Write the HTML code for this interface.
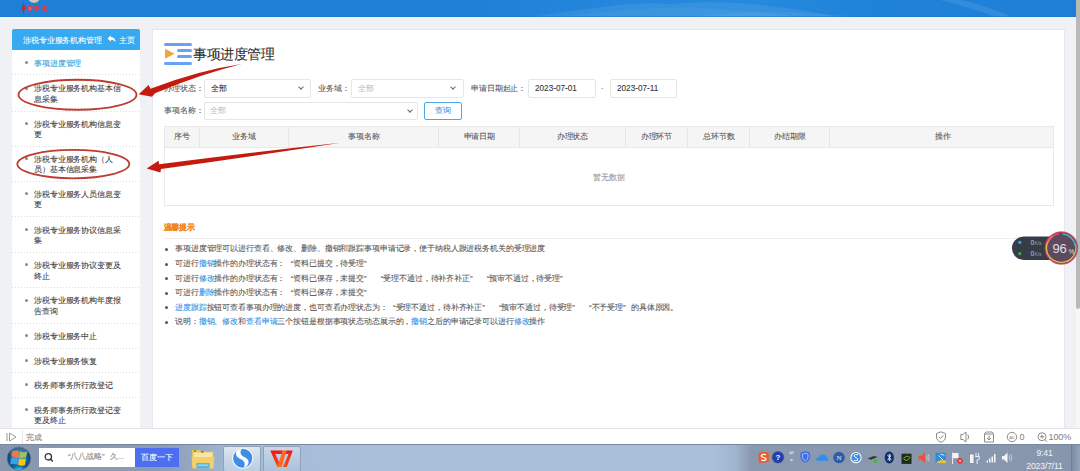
<!DOCTYPE html>
<html><head><meta charset="utf-8">
<style>
*{margin:0;padding:0;box-sizing:border-box}
html,body{width:1080px;height:471px;overflow:hidden;background:#f0f1f4;font-family:"Liberation Sans",sans-serif;color:#333;position:relative;letter-spacing:-0.125px;-webkit-text-stroke:0.08px currentColor}
.a{position:absolute;white-space:nowrap}
c{display:inline-block;width:1em;letter-spacing:0;text-align:center}
#top{left:0;top:0;width:1076px;height:16.5px;background:linear-gradient(90deg,#1f7fd6 0%,#1f80d7 45%,#2487dc 58%,#2589dd 70%,#1f82d9 82%,#1f7fd7 100%);overflow:hidden}
#vscroll{left:1076px;top:0;width:4px;height:428px;background:#f7f7f7}
#side{left:12px;top:29px;width:128px;height:399px;background:#fff;overflow:hidden}
#sidehd{left:0;top:0;width:128px;height:21px;background:#36a9f1;border-radius:2px 2px 0 0;color:#fff;font-size:7.875px;line-height:21px}
.mi{position:absolute;left:0;width:128px;font-size:7.875px;line-height:10.5px}
.mi:after{content:"";position:absolute;left:0;bottom:-0.8px;width:128px;height:1px;background:repeating-linear-gradient(90deg,#dcdcdc 0 1.5px,transparent 1.5px 3px)}
.mi span{position:absolute;left:22px;top:8.9px;white-space:nowrap}
.mi i{position:absolute;left:12.8px;top:11px;width:3px;height:3px;border-radius:50%;background:#8a8a8a}
#panel{left:152px;top:28.5px;width:913px;height:400px;background:#fff;border:1px solid #e7e8ec;border-bottom:none}
.lbl{font-size:7.875px;color:#555;line-height:10px}
.sel{border:1px solid #e6e6e6;border-radius:2px;background:#fff;height:18.5px}
.sel .t{position:absolute;top:3.5px;font-size:7.875px;line-height:10px}
.chev{position:absolute;width:4px;height:4px;border-right:1.1px solid #666;border-bottom:1.1px solid #666;transform:rotate(45deg)}
#tbl{left:164px;top:125.5px;width:890px;height:80px;border:1px solid #e9e9e9;background:#fff}
#thd{left:0;top:0;width:888px;height:21.5px;background:#f5f5f5;border-bottom:1px solid #e8e8e8}
.th{position:absolute;top:0;height:20.5px;line-height:20.5px;text-align:center;font-size:7.875px;color:#555;border-right:1px solid #e6e6e6}
.tp{position:absolute;left:164px;height:12px;font-size:7.875px;line-height:12px;color:#555;white-space:nowrap}
.tp>i{position:absolute;left:0.5px;top:4.5px;width:3px;height:3px;border-radius:50%;background:#555}
.tp span{position:absolute;left:11px;top:0}
.bl{font-weight:normal;color:#2a8fe6}
.q1,.q2{display:inline-block;width:7.875px;font-style:normal}
.q1{text-align:right}
.q2{text-align:left}
.qs{display:inline-block;width:3.5px}
#status{left:0;top:428px;width:1080px;height:16px;background:#fff;border-top:1px solid #e4e4e4}
#task{left:0;top:444px;width:1080px;height:27px;background:linear-gradient(90deg,#8797ae 0%,#8b9cb4 15%,#a3bbd6 22%,#a8c0da 35%,#a8c0da 66%,#a0b6cf 68%,#8a99b0 69.6%,#8896ad 100%);border-top:1px solid #76879e;overflow:hidden}
</style></head><body>
<div id="top" class="a">
  <svg class="a" style="left:0;top:0" width="1076" height="17" viewBox="0 0 1076 17">
    <path d="M530 17 Q570 11 610 6 Q640 2 670 4 Q700 1 740 3 Q790 7 840 17 Z" fill="#ffffff" opacity="0.08"/>
    <path d="M560 17 Q600 12 640 9 Q680 6 720 9 Q760 12 800 17 Z" fill="#ffffff" opacity="0.04"/>
    <path d="M690 17 Q730 11 790 12 Q830 14 860 17 Z" fill="#ffffff" opacity="0.05"/>
    <path d="M940 0 H962 Q990 7 1012 17 H996 Q972 8 940 0 Z" fill="#ffffff" opacity="0.09"/>
    <path d="M0 16 H1076 V17 H0 Z" fill="#1a6fc4" opacity="0.4"/>
  </svg>
  <div class="a" style="left:28.3px;top:-9px;width:11.8px;height:11.8px;border-radius:50%;background:radial-gradient(circle at 50% 40%,#e4ded2,#bdb6a8)"></div>
  <svg class="a" style="left:19px;top:2px" width="32" height="12" viewBox="19 2 32 12">
    <path d="M21 7.2 Q23.5 5.6 26.3 6.6 Q26 9.3 23.5 9.6 Q21.3 9.3 21 7.2 Z" fill="#e8141c"/>
    <path d="M22.3 7.4 Q23.5 6.8 25 7.3" stroke="#f26060" stroke-width="0.6" fill="none"/>
    <path d="M23.6 3.5 V13.3" stroke="#e8141c" stroke-width="1.3"/>
    <path d="M27.8 6.8 Q30.5 5 32.5 6 L32 10.8 Q29.2 11.5 27.6 9.8 Z" fill="#e53a44"/>
    <path d="M28.8 7.8 L31.3 8.3 M29 9.3 L31 9.6" stroke="#f7a0a6" stroke-width="0.6"/>
    <path d="M35 6.2 L34.6 10.3 M36.6 5.3 Q37.2 8 36.2 10.8 M38 6 Q38.5 9 39.8 10.3" fill="none" stroke="#e53a44" stroke-width="1.1"/>
    <path d="M41.3 8.6 Q44 7.3 48 8 M44.6 5.2 V10.8 Q46.2 11.3 48 9.6 M46.6 5.8 L47.8 7" fill="none" stroke="#e53a44" stroke-width="1.2"/>
    <path d="M42.5 9.5 Q45 10.5 47.5 10" stroke="#e53a44" stroke-width="1" fill="none"/>
  </svg>
</div>
<div id="vscroll" class="a"><div class="a" style="left:0;top:0;width:4px;height:309px;background:#b9b9b9;border-radius:0 0 2px 2px"></div></div>

<div id="side" class="a">
  <div id="sidehd" class="a"><span class="a" style="left:11px;top:0.7px"><c>涉</c><c>税</c><c>专</c><c>业</c><c>服</c><c>务</c><c>机</c><c>构</c><c>管</c><c>理</c></span>
  <svg class="a" style="left:95px;top:6px" width="9" height="8" viewBox="0 0 9 8"><path d="M0.5 3.5 L4 0.5 L4 2.3 C7 2.3 8.5 4 8.5 7.5 C7.6 5.6 6.2 4.8 4 4.8 L4 6.6 Z" fill="#fff"/></svg>
  <span class="a" style="left:107px;top:0.7px"><c>主</c><c>页</c></span></div>
</div>
<div class="a" style="left:12px;top:0;width:128px;height:428px;overflow:hidden">
<div class="mi" style="top:50.0px;height:24.5px"><i></i><span style="color:#2c9bd3"><c>事</c><c>项</c><c>进</c><c>度</c><c>管</c><c>理</c></span></div>
<div class="mi" style="top:75.5px;height:35.5px"><i></i><span style="color:#3a3a3a"><c>涉</c><c>税</c><c>专</c><c>业</c><c>服</c><c>务</c><c>机</c><c>构</c><c>基</c><c>本</c><c>信</c><br><c>息</c><c>采</c><c>集</c></span></div>
<div class="mi" style="top:111.0px;height:35.0px"><i></i><span style="color:#3a3a3a"><c>涉</c><c>税</c><c>专</c><c>业</c><c>服</c><c>务</c><c>机</c><c>构</c><c>信</c><c>息</c><c>变</c><br><c>更</c></span></div>
<div class="mi" style="top:146.0px;height:35.0px"><i></i><span style="color:#3a3a3a"><c>涉</c><c>税</c><c>专</c><c>业</c><c>服</c><c>务</c><c>机</c><c>构</c><c>（</c><c>人</c><br><c>员</c><c>）</c><c>基</c><c>本</c><c>信</c><c>息</c><c>采</c><c>集</c></span></div>
<div class="mi" style="top:181.0px;height:35.7px"><i></i><span style="color:#3a3a3a"><c>涉</c><c>税</c><c>专</c><c>业</c><c>服</c><c>务</c><c>人</c><c>员</c><c>信</c><c>息</c><c>变</c><br><c>更</c></span></div>
<div class="mi" style="top:216.7px;height:35.6px"><i></i><span style="color:#3a3a3a"><c>涉</c><c>税</c><c>专</c><c>业</c><c>服</c><c>务</c><c>协</c><c>议</c><c>信</c><c>息</c><c>采</c><br><c>集</c></span></div>
<div class="mi" style="top:252.3px;height:35.3px"><i></i><span style="color:#3a3a3a"><c>涉</c><c>税</c><c>专</c><c>业</c><c>服</c><c>务</c><c>协</c><c>议</c><c>变</c><c>更</c><c>及</c><br><c>终</c><c>止</c></span></div>
<div class="mi" style="top:287.6px;height:35.4px"><i></i><span style="color:#3a3a3a"><c>涉</c><c>税</c><c>专</c><c>业</c><c>服</c><c>务</c><c>机</c><c>构</c><c>年</c><c>度</c><c>报</c><br><c>告</c><c>查</c><c>询</c></span></div>
<div class="mi" style="top:323.0px;height:25.0px"><i></i><span style="color:#3a3a3a"><c>涉</c><c>税</c><c>专</c><c>业</c><c>服</c><c>务</c><c>中</c><c>止</c></span></div>
<div class="mi" style="top:348.0px;height:24.4px"><i></i><span style="color:#3a3a3a"><c>涉</c><c>税</c><c>专</c><c>业</c><c>服</c><c>务</c><c>恢</c><c>复</c></span></div>
<div class="mi" style="top:372.4px;height:24.6px"><i></i><span style="color:#3a3a3a"><c>税</c><c>务</c><c>师</c><c>事</c><c>务</c><c>所</c><c>行</c><c>政</c><c>登</c><c>记</c></span></div>
<div class="mi" style="top:397.0px;height:35.5px"><i></i><span style="color:#3a3a3a"><c>税</c><c>务</c><c>师</c><c>事</c><c>务</c><c>所</c><c>行</c><c>政</c><c>登</c><c>记</c><c>变</c><br><c>更</c><c>及</c><c>终</c><c>止</c></span></div>
</div>

<div id="panel" class="a"></div>

<!-- title -->
<div class="a" style="left:164px;top:42.5px;width:28px;height:3px;border-radius:1.5px;background:#69a2f3"></div>
<div class="a" style="left:176.5px;top:48.5px;width:15.5px;height:3px;border-radius:1.5px;background:#69a2f3"></div>
<div class="a" style="left:176.5px;top:54.7px;width:15.5px;height:3px;border-radius:1.5px;background:#69a2f3"></div>
<div class="a" style="left:164px;top:61.5px;width:28px;height:3px;border-radius:1.5px;background:#69a2f3"></div>
<svg class="a" style="left:164px;top:48px" width="12" height="12" viewBox="0 0 12 12"><path d="M1 0.8 L10.5 5.7 L1 10.8 Z" fill="#f7a33d"/></svg>
<div class="a" style="left:193px;top:46.5px;font-size:13.5px;line-height:16px;color:#2b2b2b;letter-spacing:-0.6px"><c>事</c><c>项</c><c>进</c><c>度</c><c>管</c><c>理</c></div>

<!-- form row 1 -->
<div class="a lbl" style="left:164px;top:84px"><c>办</c><c>理</c><c>状</c><c>态</c><c>：</c></div>
<div class="a sel" style="left:204px;top:79.3px;width:107px"><span class="t" style="left:6px;color:#333"><c>全</c><c>部</c></span><i class="chev" style="left:93.5px;top:5px"></i></div>
<div class="a lbl" style="left:318px;top:84px"><c>业</c><c>务</c><c>域</c><c>：</c></div>
<div class="a sel" style="left:351px;top:79.3px;width:112.5px"><span class="t" style="left:6px;color:#c4c4c4"><c>全</c><c>部</c></span><i class="chev" style="left:99px;top:5px"></i></div>
<div class="a lbl" style="left:471px;top:84px"><c>申</c><c>请</c><c>日</c><c>期</c><c>起</c><c>止</c><c>：</c></div>
<div class="a sel" style="left:528px;top:79.3px;width:67.5px"><span class="t" style="left:6px;top:4.2px;color:#333;font-size:8.2px;letter-spacing:0">2023-07-01</span></div>
<div class="a lbl" style="left:601px;top:83px;color:#888">-</div>
<div class="a sel" style="left:610px;top:79.3px;width:67px"><span class="t" style="left:6px;top:4.2px;color:#333;font-size:8.2px;letter-spacing:0">2023-07-11</span></div>
<!-- form row 2 -->
<div class="a lbl" style="left:164px;top:106px"><c>事</c><c>项</c><c>名</c><c>称</c><c>：</c></div>
<div class="a sel" style="left:204px;top:102.3px;width:214px;height:17.5px"><span class="t" style="left:5px;top:3px;color:#c4c4c4"><c>全</c><c>部</c></span><i class="chev" style="left:203px;top:4.5px"></i></div>
<div class="a" style="left:424px;top:102.3px;width:38px;height:17.5px;border:1px solid #4ea6ea;border-radius:2px;background:#fff;color:#3a95e6;font-size:7.875px;line-height:15.5px;text-align:center"><c>查</c><c>询</c></div>

<!-- table -->
<div id="tbl" class="a">
  <div id="thd" class="a">
<div class="th" style="left:0.0px;width:34.7px"><c>序</c><c>号</c></div>
<div class="th" style="left:34.7px;width:89.7px"><c>业</c><c>务</c><c>域</c></div>
<div class="th" style="left:124.4px;width:150.1px"><c>事</c><c>项</c><c>名</c><c>称</c></div>
<div class="th" style="left:274.5px;width:80.5px"><c>申</c><c>请</c><c>日</c><c>期</c></div>
<div class="th" style="left:355.0px;width:105.8px"><c>办</c><c>理</c><c>状</c><c>态</c></div>
<div class="th" style="left:460.8px;width:62.2px"><c>办</c><c>理</c><c>环</c><c>节</c></div>
<div class="th" style="left:523.0px;width:62.3px"><c>总</c><c>环</c><c>节</c><c>数</c></div>
<div class="th" style="left:585.3px;width:80.0px"><c>办</c><c>结</c><c>期</c><c>限</c></div>
<div class="th" style="left:665.3px;width:224.7px;border-right:none"><c>操</c><c>作</c></div>
  </div>
  <div class="a" style="left:0;top:46px;width:888px;text-align:center;font-size:7.875px;line-height:10px;color:#999"><c>暂</c><c>无</c><c>数</c><c>据</c></div>
</div>

<!-- tips -->
<div class="a" style="left:163.5px;top:222.5px;font-size:7.875px;line-height:10px;color:#f0861a;font-weight:bold"><c>温</c><c>馨</c><c>提</c><c>示</c></div>
<div class="a" style="left:164px;top:237.5px;width:890px;height:1px;background:#ececec"></div>
<div class="tp" style="top:243.4px"><i></i><span><c>事</c><c>项</c><c>进</c><c>度</c><c>管</c><c>理</c><c>可</c><c>以</c><c>进</c><c>行</c><c>查</c><c>看</c><c>、</c><c>修</c><c>改</c><c>、</c><c>删</c><c>除</c><c>、</c><c>撤</c><c>销</c><c>和</c><c>跟</c><c>踪</c><c>事</c><c>项</c><c>申</c><c>请</c><c>记</c><c>录</c><c>，</c><c>便</c><c>于</c><c>纳</c><c>税</c><c>人</c><c>跟</c><c>进</c><c>税</c><c>务</c><c>机</c><c>关</c><c>的</c><c>受</c><c>理</c><c>进</c><c>度</c></span></div>
<div class="tp" style="top:258.0px"><i></i><span><c>可</c><c>进</c><c>行</c><b class="bl"><c>撤</c><c>销</c></b><c>操</c><c>作</c><c>的</c><c>办</c><c>理</c><c>状</c><c>态</c><c>有</c><c>：</c><em class="q1">“</em><c>资</c><c>料</c><c>已</c><c>提</c><c>交</c><c>，</c><c>待</c><c>受</c><c>理</c><em class="q2">”</em></span></div>
<div class="tp" style="top:272.6px"><i></i><span><c>可</c><c>进</c><c>行</c><b class="bl"><c>修</c><c>改</c></b><c>操</c><c>作</c><c>的</c><c>办</c><c>理</c><c>状</c><c>态</c><c>有</c><c>：</c><em class="q1">“</em><c>资</c><c>料</c><c>已</c><c>保</c><c>存</c><c>，</c><c>未</c><c>提</c><c>交</c><em class="q2">”</em><i class="qs"></i><em class="q1">“</em><c>受</c><c>理</c><c>不</c><c>通</c><c>过</c><c>，</c><c>待</c><c>补</c><c>齐</c><c>补</c><c>正</c><em class="q2">”</em><i class="qs"></i><em class="q1">“</em><c>预</c><c>审</c><c>不</c><c>通</c><c>过</c><c>，</c><c>待</c><c>受</c><c>理</c><em class="q2">”</em></span></div>
<div class="tp" style="top:287.2px"><i></i><span><c>可</c><c>进</c><c>行</c><b class="bl"><c>删</c><c>除</c></b><c>操</c><c>作</c><c>的</c><c>办</c><c>理</c><c>状</c><c>态</c><c>有</c><c>：</c><em class="q1">“</em><c>资</c><c>料</c><c>已</c><c>保</c><c>存</c><c>，</c><c>未</c><c>提</c><c>交</c><em class="q2">”</em></span></div>
<div class="tp" style="top:301.8px"><i></i><span><b class="bl"><c>进</c><c>度</c><c>跟</c><c>踪</c></b><c>按</c><c>钮</c><c>可</c><c>查</c><c>看</c><c>事</c><c>项</c><c>办</c><c>理</c><c>的</c><c>进</c><c>度</c><c>，</c><c>也</c><c>可</c><c>查</c><c>看</c><c>办</c><c>理</c><c>状</c><c>态</c><c>为</c><c>：</c><em class="q1">“</em><c>受</c><c>理</c><c>不</c><c>通</c><c>过</c><c>，</c><c>待</c><c>补</c><c>齐</c><c>补</c><c>正</c><em class="q2">”</em><i class="qs"></i><em class="q1">“</em><c>预</c><c>审</c><c>不</c><c>通</c><c>过</c><c>，</c><c>待</c><c>受</c><c>理</c><em class="q2">”</em><i class="qs"></i><em class="q1">“</em><c>不</c><c>予</c><c>受</c><c>理</c><em class="q2">”</em><c>的</c><c>具</c><c>体</c><c>原</c><c>因</c><c>。</c></span></div>
<div class="tp" style="top:316.4px"><i></i><span><c>说</c><c>明</c><c>：</c><b class="bl"><c>撤</c><c>销</c></b><c>、</c><b class="bl"><c>修</c><c>改</c></b><c>和</c><b class="bl"><c>查</c><c>看</c><c>申</c><c>请</c></b><c>三</c><c>个</c><c>按</c><c>钮</c><c>是</c><c>根</c><c>据</c><c>事</c><c>项</c><c>状</c><c>态</c><c>动</c><c>态</c><c>展</c><c>示</c><c>的</c><c>，</c><b class="bl"><c>撤</c><c>销</c></b><c>之</c><c>后</c><c>的</c><c>申</c><c>请</c><c>记</c><c>录</c><c>可</c><c>以</c><c>进</c><c>行</c><b class="bl"><c>修</c><c>改</c></b><c>操</c><c>作</c></span></div>


<!-- annotations -->
<svg class="a" style="left:0;top:0" width="1080" height="471" viewBox="0 0 1080 471">
  <ellipse cx="77.5" cy="94.75" rx="59" ry="15" fill="none" stroke="#bd3b30" stroke-width="1.8"/>
  <ellipse cx="73.3" cy="164.1" rx="56" ry="14.2" fill="none" stroke="#bd3b30" stroke-width="1.8"/>
  <path d="M241.8 64.1 Q199 70.3 150.5 88.8 L148.6 85 L138.7 94.3 L152 96.8 L155 93.2 Q202 73.8 241.8 64.1 Z" fill="#c41b0e"/>
  <path d="M340.6 142.8 Q250 152.5 159.1 164.3 L158.5 160.8 L146.7 168.5 L160.4 172.6 L161 169.1 Q252 156.5 340.6 142.8 Z" fill="#c41b0e"/>
</svg>


<!-- net widget -->
<svg class="a" style="left:1000px;top:225px" width="80" height="45" viewBox="1000 225 80 45">
  <defs>
    <linearGradient id="arc" x1="0" y1="1" x2="1" y2="0">
      <stop offset="0" stop-color="#f2b63a"/><stop offset="0.45" stop-color="#e8c04a"/><stop offset="0.7" stop-color="#8fd06a"/><stop offset="1" stop-color="#3fc9c0"/>
    </linearGradient>
    <radialGradient id="glow" cx="50%" cy="50%" r="50%"><stop offset="0.8" stop-color="#e0417a" stop-opacity="0.9"/><stop offset="1" stop-color="#e0417a" stop-opacity="0"/></radialGradient>
  </defs>
  <path d="M1023.7 236.5 H1062 V260 H1023.7 A11.75 11.75 0 0 1 1023.7 236.5 Z" fill="#373c47"/>
  <circle cx="1019.8" cy="242.3" r="1.6" fill="#3fa3ee"/>
  <circle cx="1019.8" cy="253.6" r="1.6" fill="#33b544"/>
  <text x="1030.5" y="244.6" font-size="6.5" fill="#c9ccd2" font-family="Liberation Sans">0</text>
  <text x="1034.5" y="244.6" font-size="5" fill="#9ea3ad" font-family="Liberation Sans">K/s</text>
  <text x="1030.5" y="256" font-size="6.5" fill="#c9ccd2" font-family="Liberation Sans">0</text>
  <text x="1034.5" y="256" font-size="5" fill="#9ea3ad" font-family="Liberation Sans">K/s</text>
  <circle cx="1061.4" cy="248" r="17.5" fill="url(#glow)"/>
  <circle cx="1061.4" cy="248" r="16" fill="#5d4a5e" stroke="#d23f6c" stroke-width="1.2"/>
  <path d="M1052.6 236.3 A14.3 14.3 0 0 0 1061.4 262.3 A14.3 14.3 0 0 0 1075.3 244" fill="none" stroke="url(#arc)" stroke-width="1.3"/>
  <path d="M1052.6 236.3 A14.3 14.3 0 0 1 1059 233.9" fill="none" stroke="#e44d7a" stroke-width="1.3"/>
  <path d="M1052.6 236.3 A14.3 14.3 0 0 0 1048 243" fill="none" stroke="#ee6a4a" stroke-width="1.3"/>
  <path d="M1062.5 233.8 A14.3 14.3 0 0 1 1075.4 246" fill="none" stroke="#3cc4bd" stroke-width="1.3"/>
  <text x="1059.5" y="253.2" font-size="13" text-anchor="middle" fill="#e4dfe6" font-family="Liberation Sans">96</text>
  <text x="1071.3" y="253.5" font-size="6.5" text-anchor="middle" fill="#e4dfe6" font-family="Liberation Sans">%</text>
</svg>

<!-- status bar -->
<div id="status" class="a">
  <svg class="a" style="left:6px;top:3px" width="12" height="10" viewBox="0 0 12 10"><path d="M1 1 V9" stroke="#999" stroke-width="1"/><path d="M3.5 1 L10 5 L3.5 9 Z" fill="none" stroke="#999" stroke-width="1"/></svg>
  <div class="a" style="left:21.5px;top:1px;width:1px;height:14px;background:#e6e6e6"></div>
  <div class="a" style="left:25.5px;top:3.3px;font-size:8.4px;line-height:10px;color:#808080"><c>完</c><c>成</c></div>
  <svg class="a" style="left:930px;top:1px" width="150" height="14" viewBox="930 429 150 14">
    <path d="M936.5 432.5 L941 430.8 L945.5 432.5 V436 C945.5 438.8 943.5 440.5 941 441.3 C938.5 440.5 936.5 438.8 936.5 436 Z" fill="none" stroke="#808080" stroke-width="0.9"/>
    <path d="M939 435.8 L940.7 437.4 L943.3 434.4" fill="none" stroke="#808080" stroke-width="0.9"/>
    <path d="M960.8 433.5 H963 L966 431 V441 L963 438.5 H960.8 Z" fill="none" stroke="#808080" stroke-width="0.9"/>
    <path d="M967.8 433.5 Q969.5 436 967.8 438.5" fill="none" stroke="#808080" stroke-width="0.9"/>
    <path d="M984.5 433 H993.5 V441 H984.5 Z M984.5 433 L986 431 H992 L993.5 433" fill="none" stroke="#808080" stroke-width="0.9"/>
    <path d="M989 434.5 V439 M987 437 L989 439 L991 437" fill="none" stroke="#808080" stroke-width="0.9"/>
    <circle cx="1012" cy="436" r="4.7" fill="none" stroke="#808080" stroke-width="0.9"/>
    <text x="1012" y="437.8" font-size="4.2" text-anchor="middle" fill="#808080" font-family="Liberation Sans">AD</text>
    <text x="1019.5" y="439.3" font-size="9" fill="#808080" font-family="Liberation Sans">0</text>
    <circle cx="1042" cy="435.7" r="4" fill="none" stroke="#808080" stroke-width="0.9"/>
    <path d="M1044.9 438.6 L1047 440.8 M1040 435.7 H1044 M1042 433.7 V437.7" stroke="#808080" stroke-width="0.9"/>
    <text x="1048.5" y="439.3" font-size="9" fill="#808080" font-family="Liberation Sans">100%</text>
  </svg>
</div>
<div id="task" class="a">
  <!-- start orb -->
  <svg class="a" style="left:5px;top:0px" width="28" height="27" viewBox="5 444 28 27">
    <defs>
      <radialGradient id="orb" cx="50%" cy="55%" r="55%"><stop offset="0" stop-color="#2f8fd0"/><stop offset="0.7" stop-color="#125a9c"/><stop offset="1" stop-color="#0a2f5a"/></radialGradient>
      <radialGradient id="orbg" cx="50%" cy="100%" r="50%"><stop offset="0" stop-color="#2fe0ff"/><stop offset="1" stop-color="#2fe0ff" stop-opacity="0"/></radialGradient>
    </defs>
    <circle cx="18.9" cy="457.6" r="11.7" fill="url(#orb)" stroke="#5c7598" stroke-width="0.7"/>
    <ellipse cx="18.9" cy="464.5" rx="8" ry="4.5" fill="url(#orbg)" opacity="0.9"/>
    <path d="M12.5 450.2 Q15.8 448.6 19.6 450.4 L18.6 456.6 Q15.3 455 11.4 456.4 Z" fill="#ea5a1e"/>
    <path d="M20.2 450.6 Q23.5 452.2 27 450.6 L26 457 Q22.6 458.4 19.2 456.9 Z" fill="#7fbb35"/>
    <path d="M11.3 457 Q15 455.6 18.5 457.2 L17.5 463.5 Q14 462 10.3 463.3 Z" fill="#3aa3e3"/>
    <path d="M19.1 457.5 Q22.5 459 25.9 457.5 L24.9 463.9 Q21.5 465.4 18.1 463.8 Z" fill="#fbc51c"/>
    <ellipse cx="18.9" cy="451.5" rx="9" ry="5.5" fill="#e8f0ff" opacity="0.22"/>
  </svg>
<!-- search -->
  <div class="a" style="left:39.3px;top:3px;width:95.5px;height:19px;background:#fff"></div>
  <svg class="a" style="left:44px;top:7px" width="10" height="11" viewBox="0 0 10 11"><circle cx="4.3" cy="4.8" r="3.2" fill="none" stroke="#333" stroke-width="1.3"/><path d="M6.6 7.2 L8.8 9.5" stroke="#333" stroke-width="1.4"/></svg>
  <div class="a" style="left:62.5px;top:7px;font-size:7.875px;line-height:10px;color:#888"><em class="q1">“</em><c>八</c><c>八</c><c>战</c><c>略</c><em class="q2">”</em><c>久</c>...</div>
  <div class="a" style="left:134.8px;top:3px;width:44px;height:19px;background:#4e6ef2;color:#fff;font-size:7.8px;line-height:19px;text-align:center"><c>百</c><c>度</c><c>一</c><c>下</c></div>
  <!-- folder -->
  <svg class="a" style="left:190px;top:1px" width="26" height="25" viewBox="190 445 26 25">
    <path d="M192 449 H200 L202 450.5 H213.5 V466 H192 Z" fill="#e8c25a"/>
    <path d="M193.5 451.5 H212.5 V463 H193.5 Z" fill="#f7e6a8"/>
    <rect x="194" y="449.3" width="2" height="1.5" fill="#4a9b3a"/><rect x="201" y="450" width="2.5" height="1.5" fill="#d34b3a"/>
    <path d="M191.5 456 H214.5 L213.5 467.5 H192.5 Z" fill="#f1cf6b"/>
    <path d="M196.5 462 H209.5 V467.5 H196.5 Z" fill="#5fb1e3"/>
    <path d="M198 463.5 H208 V465 H198 Z" fill="#9fd4f2"/>
  </svg>
  <!-- sogou button -->
  <div class="a" style="left:223.2px;top:1px;width:38px;height:25.5px;border:1px solid #8fa2ba;border-radius:2px;background:linear-gradient(180deg,#dde8f3 0%,#c9d8e8 50%,#bccee2 100%)"></div>
  <svg class="a" style="left:230px;top:1px" width="26" height="26" viewBox="230 445 26 26">
    <circle cx="242.7" cy="457.3" r="10.6" fill="#f4f7fb"/>
    <circle cx="242.7" cy="457.3" r="9.5" fill="#3f8ee6"/>
    <path d="M236.3 450.2 Q234.8 455.5 239.5 457.5 Q243.5 459 244.5 461.5 Q245.3 464 243.8 466.6 Q248.5 465.2 248.6 461.2 Q248.5 457.8 244.3 456 Q240.2 454.2 240.5 450.8 Q240.8 449 242.2 447.9 Q238.5 448.2 236.3 450.2 Z" fill="#fbfdff"/>
  </svg>
<!-- wps button -->
  <div class="a" style="left:262.8px;top:1px;width:38px;height:25.5px;border:1px solid #8fa2ba;border-radius:2px;background:linear-gradient(180deg,#c9d8e8 0%,#b8cbe0 50%,#adc2da 100%)"></div>
  <svg class="a" style="left:266px;top:2px" width="32" height="24" viewBox="266 446 32 24">
    <defs><linearGradient id="wg" x1="0" y1="0" x2="0" y2="1"><stop offset="0" stop-color="#f2161c"/><stop offset="1" stop-color="#ff4a12"/></linearGradient></defs>
    <path d="M270.3 449.6 H283 L281.8 453.1 H275.3 L279.3 461.5 L278.2 466.1 H277.4 Z" fill="url(#wg)"/>
    <path d="M286.4 449.6 H292.8 L286.8 466.1 H283 L288.6 453.1 H285.3 Z" fill="url(#wg)"/>
    <path d="M282.6 449.6 H286.6 L281.6 466.1 H277.4 Z" fill="#ff6a1c"/>
  </svg>
<!-- tray -->
  <svg class="a" style="left:750px;top:0" width="330" height="27" viewBox="750 444 330 27">
    <path d="M758.5 452 Q763 450.3 768.5 451.2 L769.2 460.5 Q764 462.3 758.8 461.5 Z" fill="#ee5b26"/>
    <path d="M766 453.6 Q762 452.6 761.3 454.8 Q761.3 456.2 764 456.6 Q766.5 457.2 766 458.6 Q765 460 761.2 459.2" fill="none" stroke="#fff" stroke-width="1.3"/>
    <circle cx="778" cy="456.3" r="5.8" fill="#1e3fb5" stroke="#555" stroke-width="0.6"/>
    <text x="778" y="459.3" font-size="8" font-weight="bold" text-anchor="middle" fill="#fff" font-family="Liberation Sans">?</text>
    <path d="M789.5 451.5 L793.5 450.5 M789.5 453 L793.5 452" stroke="#e8eef5" stroke-width="0.8"/>
    <path d="M789.7 458.6 L793.3 458.6 L791.5 460.3 Z" fill="#e8eef5"/>
    <path d="M800.5 451.8 L805.3 450 L810 451.8 V455.5 Q810 459.8 805.3 461.8 Q800.5 459.8 800.5 455.5 Z" fill="#3c6ee8"/>
    <path d="M802.5 453.2 L805.3 452 L808 453.2 V455.8 Q808 458.5 805.3 459.8 Q802.5 458.5 802.5 455.8 Z" fill="none" stroke="#cfe0ff" stroke-width="0.7"/>
    <path d="M816.5 459.8 Q815.5 456.5 818.8 456.2 Q819.8 452.8 823.5 453.6 Q826.5 453.5 827 456.5 Q829 457.3 828.2 459.8 Z" fill="#2e8ff0"/>
    <circle cx="839" cy="456.5" r="5.8" fill="#2f5aa8"/>
    <text x="839" y="459.3" font-size="7" text-anchor="middle" fill="#e8eef8" font-family="Liberation Serif">N</text>
    <circle cx="856" cy="456.7" r="5.6" fill="#fff"/><circle cx="856" cy="456.7" r="4.6" fill="#3a8ee8"/>
    <path d="M858 453.8 Q855 452.8 854 454.5 Q853.8 456 856.3 456.7 Q858.5 457.5 857.5 459.3 Q856 460.3 853.8 459.4" fill="none" stroke="#fff" stroke-width="1"/>
    <path d="M867.5 457.5 L874 455 L877.5 456 L871 458.8 Z" fill="#333"/>
    <path d="M868 458.5 L871 459.6 L875 458" stroke="#999" stroke-width="0.8" fill="none"/>
    <circle cx="875.5" cy="460" r="2" fill="#3cbf3c"/>
    <ellipse cx="889.3" cy="456.5" rx="4.6" ry="6" fill="#0d2f6b"/>
    <path d="M887.5 453.8 L891 458.3 L889.3 460 V453 L891 454.7 L887.5 459.2" fill="none" stroke="#fff" stroke-width="0.8"/>
    <rect x="901.5" y="452.7" width="10" height="10.2" fill="#1f2a1f"/>
    <path d="M903.5 457.6 Q906.5 453.5 910 456.5 Q906.5 461.5 903.5 457.6 Z" fill="none" stroke="#76b900" stroke-width="1"/>
    <path d="M918.5 455 H921 L925 451.5 V462 L921 458.5 H918.5 Z" fill="#e8543a"/>
    <path d="M926.5 454.5 Q928 456.8 926.5 459 M928 453 Q930.5 456.8 928 460.5" fill="none" stroke="#d9dde3" stroke-width="0.7"/>
    <rect x="935.5" y="451.8" width="10.5" height="10.5" fill="#2f8de0"/>
    <path d="M936 462.3 Q939 458 946 459.5 V462.3 Z" fill="#e7c13a"/>
    <path d="M938.5 454.5 L943 459 M940.3 453.3 L944.5 454.2" stroke="#cfe9ff" stroke-width="1"/>
    <path d="M952.5 451.5 V463" stroke="#f4f4f4" stroke-width="0.9"/>
    <path d="M953 452 H958.5 V457.2 H953 Z" fill="#f4f4f4"/>
    <circle cx="960" cy="459.8" r="2.8" fill="#e23030"/>
    <path d="M958.8 458.6 L961.2 461 M961.2 458.6 L958.8 461" stroke="#fff" stroke-width="0.7"/>
    <rect x="969.5" y="453" width="4.5" height="9.5" fill="#eef2f6" stroke="#666" stroke-width="0.5"/>
    <path d="M976 452 V455.5 M978.5 452 V455.5 M975.2 455.5 H979.3 V458 L977.2 459 V463" fill="none" stroke="#eef2f6" stroke-width="1"/>
    <path d="M986.5 461.5 H988 V459.5 H986.5 Z M989 461.5 H990.5 V457.5 H989 Z M991.5 461.5 H993 V455.5 H991.5 Z M994 461.5 H995.5 V453 H994 Z" fill="#f4f6f8"/>
    <path d="M1002 455 H1004 L1007.5 451.5 V462 L1004 458.5 H1002 Z" fill="#f2f4f6"/>
    <path d="M1009 454.5 Q1010.5 456.8 1009 459 M1010.8 453 Q1013 456.8 1010.8 460.5" fill="none" stroke="#dde2e8" stroke-width="0.7"/>
    <text x="1044.5" y="455.3" font-size="8.6" text-anchor="middle" fill="#f2f5f8" font-family="Liberation Sans">9:41</text>
    <text x="1044.5" y="467.5" font-size="8.6" text-anchor="middle" fill="#f2f5f8" font-family="Liberation Sans">2023/7/11</text>
  </svg>
  <div class="a" style="left:1071px;top:0;width:9px;height:27px;background:linear-gradient(90deg,#7d8da4,#93a4bb);border-left:1px solid #6f7f96"></div>
</div>
</body></html>
